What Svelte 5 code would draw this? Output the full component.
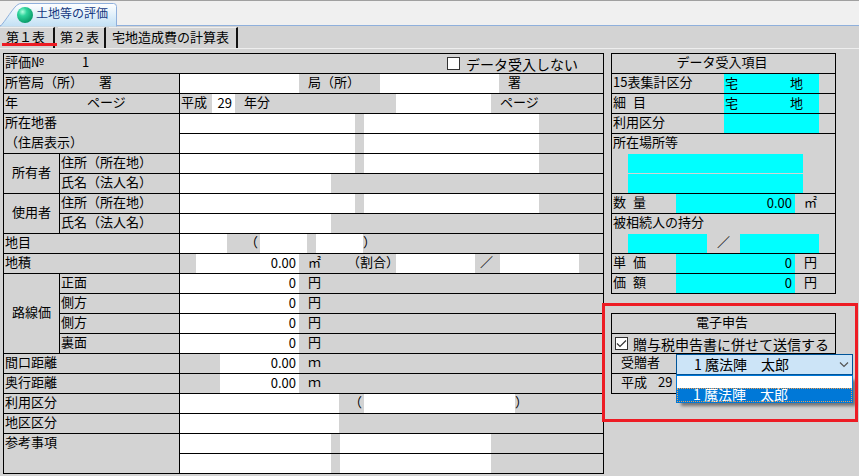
<script>
  const f = (w, value = '', label = '入力') => ({ kind: 'field', w, value, label });
  const t = (w, text = '', pad = 0) => ({ kind: 'text', w, text, pad });

  const pair = (a, b) => [f(a, '', '前半'), t(9), f(b, '', '後半')];
  const yen = [f(119, '0', '路線価'), t(60, '円', 9)];

  const rows = [
    { label: [t(78, '所管局（所）'), t(30, '署', 16)], items: [f(119, '', '局名'), t(81, '局（所）', 9), f(119, '', '署名'), t(60, '署', 9)] },
    { label: [t(80, '年'), t(60, 'ページ', 2)], items: [t(32, '平成', 1), f(23, '29', '年'), t(161, '年分', 9), f(95, '', 'ページ'), t(60, 'ページ', 9)] },
    { label: [t(100, '所在地番')], span: 2, second: '（住居表示）', items: pair(175, 175) },
    { items: pair(175, 175) },
    { group: '所有者', span: 2, sub: '住所（所在地）', items: pair(175, 175) },
    { sub: '氏名（法人名）', items: [f(151, '', '所有者氏名')] },
    { group: '使用者', span: 2, sub: '住所（所在地）', items: pair(175, 175) },
    { sub: '氏名（法人名）', items: [f(151, '', '使用者氏名')] },
    { label: [t(100, '地目')], items: [f(47, '', '地目'), t(33, '（', 18), f(47, '', '地目内訳'), t(9), f(47, '', '地目内訳'), t(20, '）')] },
    { label: [t(100, '地積')], items: [t(16), f(103, '0.00', '地積'), t(48, '㎡', 9), t(49, '（割合）'), f(79, '', '割合分子'), t(25, '／', 5), f(79, '', '割合分母')] },
    { group: '路線価', span: 4, sub: '正面', items: yen },
    { sub: '側方', items: yen },
    { sub: '側方', items: yen },
    { sub: '裏面', items: yen },
    { label: [t(100, '間口距離')], items: [t(40), f(79, '0.00', '間口距離'), t(60, 'ｍ', 9)] },
    { label: [t(100, '奥行距離')], items: [t(40), f(79, '0.00', '奥行距離'), t(60, 'ｍ', 9)] },
    { label: [t(100, '利用区分')], items: [f(159, '', '利用区分'), t(25, '（', 10), f(151, '', '利用区分内訳'), t(20, '）')] },
    { label: [t(100, '地区区分')], items: [f(159, '', '地区区分')] },
    { label: [t(100, '参考事項')], span: 2, second: '', items: pair(151, 151) },
    { items: pair(151, 151) }
  ];

  const people = ['1 魔法陣　太郎'];
  let skip = $state(false);
  let send = $state(true);
  let person = $state(people[0]);
</script>

{#snippet parts(items)}
  {#each items as p}
    {#if p.kind === 'field'}
      <input class="field" style:width="{p.w}px" value={p.value} aria-label={p.label} />
    {:else}
      <span class="part" style:width="{p.w}px" style:padding-left="{p.pad}px">{p.text}</span>
    {/if}
  {/each}
{/snippet}

<div class="app">
  <header>
    <div class="doc">
      <svg class="shape" viewBox="0 0 118 24" width="118" height="24" aria-hidden="true">
        <defs>
          <linearGradient id="tabfill" x1="0" y1="0" x2="0" y2="1">
            <stop offset="0" stop-color="#fff" /><stop offset="1" stop-color="#c2e0f5" />
          </linearGradient>
          <radialGradient id="ball" cx=".35" cy=".3" r=".75">
            <stop offset="0" stop-color="#b4ffe0" /><stop offset=".35" stop-color="#2fd49c" /><stop offset="1" stop-color="#069765" />
          </radialGradient>
        </defs>
        <path d="M0 23.500C5 19 14 3 18 1.500Q19 .5 22 .5H113.500Q116.500.5 116.500 3.500V23.500" fill="url(#tabfill)" stroke="#8fb0dc" />
        <circle cx="25" cy="12" r="8" fill="url(#ball)" />
      </svg>
      <h1>土地等の評価</h1>
    </div>
  </header>

  <nav>
    <button class="tab on">第１表</button>
    <button class="tab">第２表</button>
    <button class="tab long-tab">宅地造成費の計算表</button>
  </nav>

  <main>
    <section class="sheet">
      <div class="cell top">
        <span class="part no">評価№</span><span class="part num">1</span>
        <label class="check skip"><input type="checkbox" bind:checked={skip} />データ受入しない</label>
      </div>
      {#each rows as r}
        {#if r.label}
          <div class="cell wide" class:two={r.span === 2}>
            <div class="line">{@render parts(r.label)}</div>
            {#if r.second}<div class="line">{r.second}</div>{/if}
          </div>
        {/if}
        {#if r.group}
          <div class="cell group" style:grid-row="span {r.span}">{r.group}</div>
        {/if}
        {#if r.sub}<div class="cell sub">{r.sub}</div>{/if}
        <div class="cell values">{@render parts(r.items)}</div>
      {/each}
    </section>

    <aside>
      <section class="box">
        <h2 class="row">データ受入項目</h2>
        <div class="row"><label for="k15">15表集計区分</label><input id="k15" class="cyan kind" value="宅　　　　地" /></div>
        <div class="row"><label for="ksai">細 <span class="apart">目</span></label><input id="ksai" class="cyan kind" value="宅　　　　地" /></div>
        <div class="row"><label for="kuse">利用区分</label><input id="kuse" class="cyan kind" /></div>
        <div class="row open"><label for="place">所在場所等</label></div>
        <div class="row open indent"><input id="place" class="cyan place" /></div>
        <div class="row indent"><input class="cyan place" aria-label="所在場所等 2行目" /></div>
        <div class="row"><label class="short" for="qty">数 <span class="apart">量</span></label><input id="qty" class="cyan amount" value="0.00" /><span class="unit">㎡</span></div>
        <div class="row open"><label for="share">被相続人の持分</label></div>
        <div class="row indent"><input id="share" class="cyan share" /><span class="slash">／</span><input class="cyan share" aria-label="持分の分母" /></div>
        <div class="row"><label class="short" for="price">単 <span class="apart">価</span></label><input id="price" class="cyan amount" value="0" /><span class="unit">円</span></div>
        <div class="row"><label class="short" for="total">価 <span class="apart">額</span></label><input id="total" class="cyan amount" value="0" /><span class="unit">円</span></div>
      </section>

      <section class="box efile">
        <h2 class="row">電子申告</h2>
        <div class="row"><label class="check send"><input type="checkbox" bind:checked={send} />贈与税申告書に併せて送信する</label></div>
        <div class="row inset"><label for="person">受贈者</label></div>
        <div class="row inset">平成<span class="year">29</span></div>
        <div class="combo">
          <select id="person" bind:value={person}>
            {#each people as p}<option>{p}</option>{/each}
          </select>
          <svg class="chevron" viewBox="0 0 10 6" width="10" height="6" aria-hidden="true"><path d="M1 .5L5 4.500L9 .5" fill="none" stroke="#555" stroke-width="1.200" /></svg>
          <div class="list" role="listbox" aria-label="受贈者">
            <div class="opt" role="option" aria-selected="false"></div>
            {#each people as p}<div class="opt picked" role="option" aria-selected="true">{p}</div>{/each}
          </div>
        </div>
        <div class="mark"></div>
      </section>
    </aside>
  </main>
</div>

<style>
  :global(body) { background: #d3d3d3; }
  .app, .app * { box-sizing: border-box; }
  .app {
    min-height: 100vh;
    background: #d3d3d3;
    color: #000;
    font: 13px/16px "Noto Sans CJK JP", sans-serif;
  }
  input, select, button { font: inherit; color: inherit; border: 0; border-radius: 0; margin: 0; outline: 0; }
  header { height: 26px; padding-top: 2px; background: #f0f0f0; border-top: 1px solid #a0a0a0; border-bottom: 1px solid #8fb0dc; }
  .doc { position: relative; width: 118px; height: 23px; padding-left: 36px; }
  .shape { position: absolute; left: 0; top: 0; }
  h1 { position: relative; margin: 0; font-size: 12px; line-height: 20px; font-weight: 400; color: #15387f; white-space: nowrap; }

  nav { display: flex; gap: 3px; height: 27px; padding-top: 1px; box-shadow: inset 0 -4px #d3d3d3, inset 0 -5px #eee; }
  .tab { height: 21px; padding: 0 5px 2px 2px; background: #d3d3d3; border-top: 1px solid #eee; border-right: 2px solid #111; line-height: 18px; white-space: nowrap; }
  .tab.on { position: relative; padding: 0 8px 4px 6px; }
  .tab.long-tab { padding: 0 7px 2px 3px; }
  .tab.on::after { content: ""; position: absolute; left: 2px; right: -4px; bottom: 2px; height: 3px; background: #ed1c24; }

  main { display: flex; gap: 7px; align-items: flex-start; padding: 0 23px 2px 3px; }
  .sheet { flex: 1; display: grid; grid-template-columns: 56px 120px 1fr; grid-auto-rows: 20px; border: solid #000; border-width: 1px 0 0 1px; }
  .cell { border: solid #000; border-width: 0 1px 1px 0; white-space: nowrap; min-width: 0; }
  .top { grid-column: 1 / -1; display: flex; padding-left: 1px; }
  .wide { grid-column: span 2; padding-left: 1px; }
  .two { grid-row: span 2; }
  .line { display: flex; height: 20px; }
  .group { display: flex; align-items: center; justify-content: center; padding-bottom: 3px; }
  .sub { padding-left: 1px; }
  .values { grid-column: 3; display: flex; }
  .part { flex: none; white-space: pre; }
  .no { width: 77px; }
  .field { flex: none; height: 19px; padding: 0 3px 3px; background: #fff; text-align: right; }
  .check { display: flex; align-items: center; gap: 6px; height: 19px; font-size: 14px; white-space: nowrap; }
  .check input { appearance: none; flex: none; width: 13px; height: 13px; background: #fff; border: 1px solid #333; }
  .check input:checked { background: #fff url("data:image/svg+xml,%3Csvg xmlns='http://www.w3.org/2000/svg' viewBox='0 0 11 11'%3E%3Cpath d='M1 5.500L4 8.500L10 2.500' fill='none' stroke='%23333' stroke-width='1.200'/%3E%3C/svg%3E"); }
  .skip { margin: 0 25px 0 auto; }

  aside { width: 225px; flex: none; display: grid; gap: 19px; }
  .box { border: solid #000; border-width: 1px 1px 0 1px; }
  .row { display: flex; height: 20px; padding-left: 1px; border-bottom: 1px solid #000; white-space: nowrap; }
  .row.open { border-bottom-color: transparent; }
  .row.indent { padding-left: 16px; }
  h2.row { margin: 0; padding-right: 4px; justify-content: center; font-size: 13px; font-weight: 400; }
  .row > label:first-child:not(.check) { width: 111px; }
  .row > label.short:first-child:not(.check) { width: 63px; }
  .apart { padding-left: 4px; }
  .cyan { height: 19px; padding: 0 1px 3px; background: #0ff; }
  .kind { width: 95px; }
  .place { width: 175px; }
  .amount { width: 119px; padding-right: 3px; text-align: right; }
  .share { width: 79px; }
  .slash { width: 33px; text-align: center; }
  .unit { padding-left: 9px; }
  .efile { position: relative; }
  .send { padding-left: 2px; gap: 5px; }
  .row.inset { padding-left: 9px; }
  .year { padding-left: 11px; }
  .combo { position: absolute; left: 64px; top: 40px; width: 177px; font-size: 14px; }
  select { display: block; appearance: none; width: 177px; height: 21px; padding: 0 0 1px 17px; background: #cce4f7; border: 1px solid #005499; line-height: 18px; }
  .chevron { position: absolute; right: 4px; top: 8px; }
  .list { height: 28px; background: #fff; border: 1px solid #0078d7; box-shadow: 4px 4px 3px -1px rgba(0, 0, 0, .45); }
  .opt { height: 12px; }
  .picked { height: 14px; padding-left: 16px; line-height: 12px; background: #0078d7; color: #fff; outline: 1px dotted #f0a050; outline-offset: -1px; }
  .mark { position: absolute; left: -10px; top: -11px; width: 256px; height: 119px; border: 3px solid #ed1c24; pointer-events: none; }
</style>
